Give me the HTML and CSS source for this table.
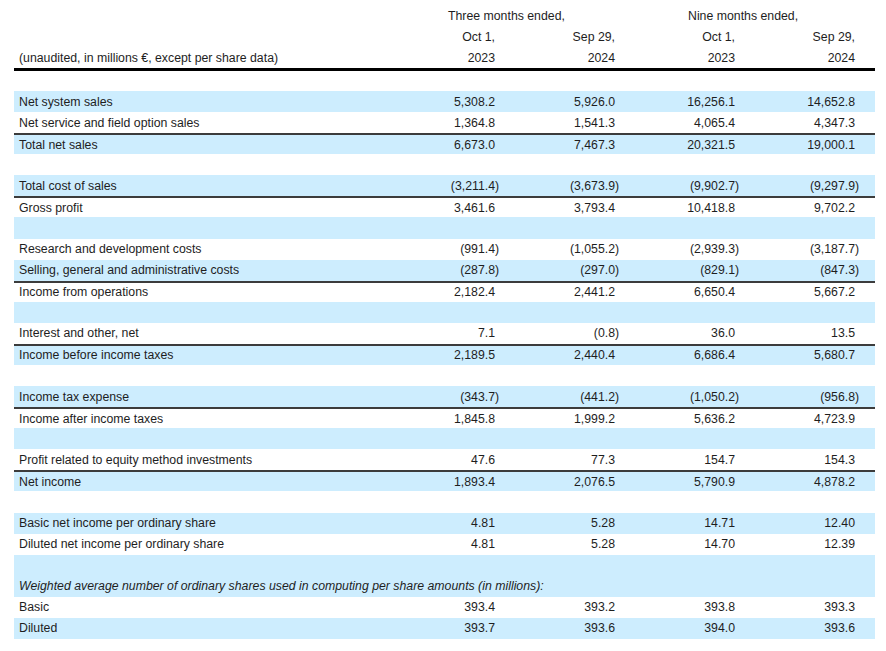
FILE: index.html
```html
<!DOCTYPE html>
<html>
<head>
<meta charset="utf-8">
<link rel="stylesheet" href="styles.css">
</head>
<body>
<div class="sheet">
  <div class="row head">
    <div class="lbl"></div>
    <div class="span2">Three months ended,</div>
    <div class="span2">Nine months ended,</div>
  </div>
  <div class="row head">
    <div class="lbl"></div>
    <div class="num">Oct 1,</div>
    <div class="num">Sep 29,</div>
    <div class="num">Oct 1,</div>
    <div class="num">Sep 29,</div>
  </div>
  <div class="row head">
    <div class="lbl">(unaudited, in millions €, except per share data)</div>
    <div class="num">2023</div>
    <div class="num">2024</div>
    <div class="num">2023</div>
    <div class="num">2024</div>
  </div>
  <div class="rule"></div>

  <div class="body">
    <div class="row b"><div class="lbl">Net system sales</div><div class="num">5,308.2</div><div class="num">5,926.0</div><div class="num">16,256.1</div><div class="num">14,652.8</div></div>
    <div class="row"><div class="lbl">Net service and field option sales</div><div class="num">1,364.8</div><div class="num">1,541.3</div><div class="num">4,065.4</div><div class="num">4,347.3</div></div>
    <div class="row b tot"><div class="lbl">Total net sales</div><div class="num">6,673.0</div><div class="num">7,467.3</div><div class="num">20,321.5</div><div class="num">19,000.1</div></div>
    <div class="row"></div>
    <div class="row b"><div class="lbl">Total cost of sales</div><div class="num"><span class="neg">(3,211.4)</span></div><div class="num"><span class="neg">(3,673.9)</span></div><div class="num"><span class="neg">(9,902.7)</span></div><div class="num"><span class="neg">(9,297.9)</span></div></div>
    <div class="row tot"><div class="lbl">Gross profit</div><div class="num">3,461.6</div><div class="num">3,793.4</div><div class="num">10,418.8</div><div class="num">9,702.2</div></div>
    <div class="row b"></div>
    <div class="row"><div class="lbl">Research and development costs</div><div class="num"><span class="neg">(991.4)</span></div><div class="num"><span class="neg">(1,055.2)</span></div><div class="num"><span class="neg">(2,939.3)</span></div><div class="num"><span class="neg">(3,187.7)</span></div></div>
    <div class="row b"><div class="lbl">Selling, general and administrative costs</div><div class="num"><span class="neg">(287.8)</span></div><div class="num"><span class="neg">(297.0)</span></div><div class="num"><span class="neg">(829.1)</span></div><div class="num"><span class="neg">(847.3)</span></div></div>
    <div class="row tot"><div class="lbl">Income from operations</div><div class="num">2,182.4</div><div class="num">2,441.2</div><div class="num">6,650.4</div><div class="num">5,667.2</div></div>
    <div class="row b"></div>
    <div class="row"><div class="lbl">Interest and other, net</div><div class="num">7.1</div><div class="num"><span class="neg">(0.8)</span></div><div class="num">36.0</div><div class="num">13.5</div></div>
    <div class="row b tot"><div class="lbl">Income before income taxes</div><div class="num">2,189.5</div><div class="num">2,440.4</div><div class="num">6,686.4</div><div class="num">5,680.7</div></div>
    <div class="row"></div>
    <div class="row b"><div class="lbl">Income tax expense</div><div class="num"><span class="neg">(343.7)</span></div><div class="num"><span class="neg">(441.2)</span></div><div class="num"><span class="neg">(1,050.2)</span></div><div class="num"><span class="neg">(956.8)</span></div></div>
    <div class="row tot"><div class="lbl">Income after income taxes</div><div class="num">1,845.8</div><div class="num">1,999.2</div><div class="num">5,636.2</div><div class="num">4,723.9</div></div>
    <div class="row b"></div>
    <div class="row"><div class="lbl">Profit related to equity method investments</div><div class="num">47.6</div><div class="num">77.3</div><div class="num">154.7</div><div class="num">154.3</div></div>
    <div class="row b tot"><div class="lbl">Net income</div><div class="num">1,893.4</div><div class="num">2,076.5</div><div class="num">5,790.9</div><div class="num">4,878.2</div></div>
    <div class="row"></div>
    <div class="row b"><div class="lbl">Basic net income per ordinary share</div><div class="num">4.81</div><div class="num">5.28</div><div class="num">14.71</div><div class="num">12.40</div></div>
    <div class="row"><div class="lbl">Diluted net income per ordinary share</div><div class="num">4.81</div><div class="num">5.28</div><div class="num">14.70</div><div class="num">12.39</div></div>
    <div class="row b"></div>
    <div class="row b"><div class="lbl wide"><em>Weighted average number of ordinary shares used in computing per share amounts (in millions):</em></div></div>
    <div class="row"><div class="lbl">Basic</div><div class="num">393.4</div><div class="num">393.2</div><div class="num">393.8</div><div class="num">393.3</div></div>
    <div class="row b"><div class="lbl">Diluted</div><div class="num">393.7</div><div class="num">393.6</div><div class="num">394.0</div><div class="num">393.6</div></div>
  </div>
</div>
</body>
</html>
```

FILE: styles.css
```css
html, body {
  margin: 0;
  padding: 0;
  background: #ffffff;
}

body {
  font-family: "Liberation Sans", Arial, Helvetica, sans-serif;
  font-size: 12.3px;
  color: #1e1e1e;
}

.sheet {
  width: 861px;
  padding: 5px 0 0 14px;
}

.row {
  display: grid;
  grid-template-columns: 381px 120px 120px 120px 120px;
  height: 21.08px;
  box-sizing: border-box;
  align-items: center;
  white-space: nowrap;
}

.head {
  height: 21px;
}

.lbl {
  padding-left: 5px;
}

.lbl.wide {
  grid-column: 1 / span 5;
}

.num {
  text-align: right;
  padding-right: 20px;
}

.span2 {
  grid-column: span 2;
  padding-left: 53px;
}

.neg {
  margin-right: -0.333em;
}

.rule {
  height: 3px;
  background: #000000;
}

.body {
  margin-top: 20px;
}

.b {
  background: #cdedfe;
}

.tot {
  border-top: 2px solid #3c3c3c;
}
```
